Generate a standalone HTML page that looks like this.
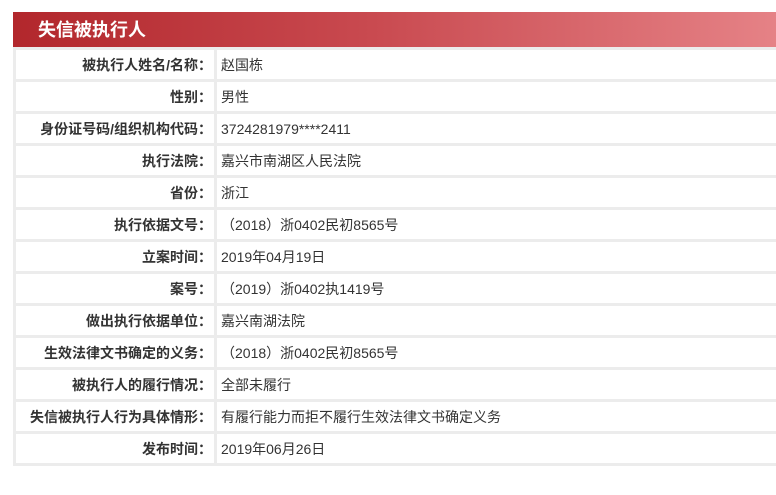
<!DOCTYPE html>
<html><head><meta charset="utf-8"><style>
body{margin:0;background:#fff;width:776px;height:495px;overflow:hidden;font-family:"Liberation Sans","Noto Sans CJK SC",sans-serif;}
.h{position:absolute;left:13px;top:12px;width:800px;height:35px;background:linear-gradient(90deg,#b2272c 0%,#c94a50 45%,#e8878b 100%);color:#fff;font-weight:bold;font-size:18px;line-height:37px;padding-left:25px;box-sizing:border-box;}
table{position:absolute;left:13px;top:47px;width:800px;border-collapse:separate;border-spacing:3px;background:#ececec;}
td{background:#fff;height:29px;padding:0;font-size:14px;color:#333;}
td.l{width:198px;box-sizing:border-box;text-align:right;font-weight:bold;padding-right:2px;}
td.v{padding-left:4px;}
</style></head><body>
<div class="h">失信被执行人</div>
<table>
<tr><td class="l">被执行人姓名/名称：</td><td class="v">赵国栋</td></tr>
<tr><td class="l">性别：</td><td class="v">男性</td></tr>
<tr><td class="l">身份证号码/组织机构代码：</td><td class="v">3724281979****2411</td></tr>
<tr><td class="l">执行法院：</td><td class="v">嘉兴市南湖区人民法院</td></tr>
<tr><td class="l">省份：</td><td class="v">浙江</td></tr>
<tr><td class="l">执行依据文号：</td><td class="v">（2018）浙0402民初8565号</td></tr>
<tr><td class="l">立案时间：</td><td class="v">2019年04月19日</td></tr>
<tr><td class="l">案号：</td><td class="v">（2019）浙0402执1419号</td></tr>
<tr><td class="l">做出执行依据单位：</td><td class="v">嘉兴南湖法院</td></tr>
<tr><td class="l">生效法律文书确定的义务：</td><td class="v">（2018）浙0402民初8565号</td></tr>
<tr><td class="l">被执行人的履行情况：</td><td class="v">全部未履行</td></tr>
<tr><td class="l">失信被执行人行为具体情形：</td><td class="v">有履行能力而拒不履行生效法律文书确定义务</td></tr>
<tr><td class="l">发布时间：</td><td class="v">2019年06月26日</td></tr>
</table>
</body></html>
